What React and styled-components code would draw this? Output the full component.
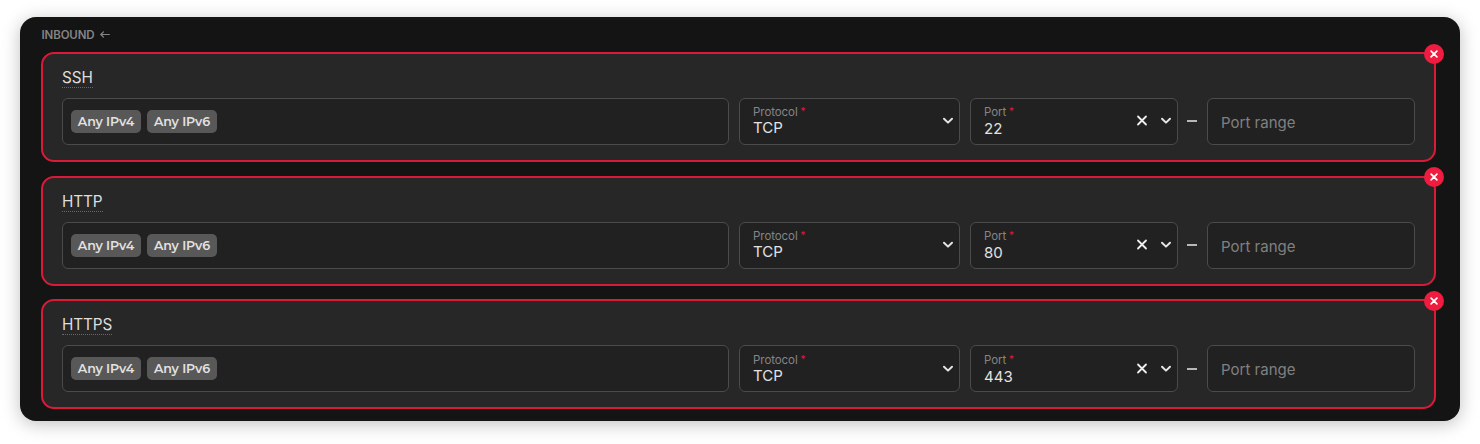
import React from "react";
import styled, { createGlobalStyle } from "styled-components";

const GlobalStyle = createGlobalStyle`
  * { box-sizing: border-box; }
  body {
    margin: 0;
    background: #fff;
    font-family: Inter, "Liberation Sans", sans-serif;
  }
`;

const Page = styled.main`
  height: 444px;
  padding: 17px 20px 23px;
  overflow: hidden;
`;

const Panel = styled.section`
  height: 404px;
  padding: 9px 24.5px 0 21.5px;
  border-radius: 16px;
  background: #141414;
  box-shadow: 0 3px 18px rgba(0, 0, 0, 0.25);
`;

const Heading = styled.h2`
  display: flex;
  align-items: center;
  gap: 5.5px;
  height: 17px;
  margin: 0 0 8.7px;
  color: #848484;
  font-size: 11.5px;
  font-weight: 600;
  line-height: 18px;
  letter-spacing: -0.12px;
`;

const Rules = styled.div`
  display: flex;
  flex-direction: column;
  gap: 13.9px;
`;

const Card = styled.article`
  position: relative;
  height: 110px;
  margin-left: -0.1px;
  padding: 13px 18.6px 0 18.6px;
  border: 2px solid #d91a38;
  border-radius: 13px;
  background: #272727;
`;

const Remove = styled.button`
  position: absolute;
  top: -10.1px;
  right: -10px;
  display: grid;
  place-items: center;
  width: 20px;
  height: 20px;
  padding: 0;
  border: 0;
  border-radius: 50%;
  background: #f01c40;
`;

const Name = styled.div`
  width: fit-content;
  height: 21px;
  margin-bottom: 10px;
  border-bottom: 1px dotted #686868;
  color: #dedede;
  font-size: 15.3px;
  line-height: 22px;
  letter-spacing: -0.1px;
`;

const Fields = styled.div`
  display: grid;
  grid-template-columns: 667.2px 221.5px 208px 10px 208px;
  column-gap: 9.5px;
  align-items: center;
`;

const Field = styled.div`
  position: relative;
  display: flex;
  align-items: center;
  height: 47px;
  padding: ${(p) => p.$pad || "0 13.4px"};
  border: 1px solid #4b4b4b;
  border-radius: 6px;
  background: #212121;
`;

const Tags = styled(Field)`
  gap: 6px;
  padding: 0 8px;
`;

const Tag = styled.span`
  width: 70px;
  height: 23px;
  border-radius: 5px;
  background: #585858;
  color: #e2e2e2;
  font-family: Montserrat, Inter, sans-serif;
  font-size: 12.6px;
  font-weight: 600;
  line-height: 24px;
  letter-spacing: -0.1px;
  text-align: center;
  white-space: nowrap;
`;

const Stack = styled.div`
  flex: 1;
  padding-top: ${(p) => p.$top || "0"};
`;

const Label = styled.div`
  height: 13px;
  color: #858585;
  font-size: 11.5px;
  line-height: 14.4px;
  letter-spacing: -0.08px;
`;

const Required = styled.span`
  position: relative;
  top: -1px;
  margin-left: 2.5px;
  color: #d91635;
  font-size: 10.5px;
  font-weight: 500;
`;

const Value = styled.div`
  margin-top: ${(p) => p.$gap || "1px"};
  color: #e2e2e2;
  font-size: 15px;
  line-height: 18.5px;
`;

const Actions = styled.div`
  display: flex;
  align-items: center;
  gap: 12px;
  height: 12px;
`;

const Dash = styled.span`
  width: 10px;
  height: 2px;
  background: #b8b8b8;
`;

const Placeholder = styled.span`
  padding-top: 2px;
  color: #808080;
  font-size: 15px;
`;

const Icon = styled.svg`
  display: block;
  transform: translateY(${(p) => p.$shift || "0"});
`;

const Chevron = () => (
  <Icon $shift="-0.5px" width="12" height="12" viewBox="0 0 12 12" fill="none" stroke="#e4e4e4" strokeWidth="2" strokeLinecap="round" strokeLinejoin="round">
    <path d="M2 4.2 6 8.1 10 4.2" />
  </Icon>
);

const ClearCross = () => (
  <Icon $shift="-0.5px" width="12" height="12" viewBox="0 0 12 12" fill="none" stroke="#eee" strokeWidth="1.8" strokeLinecap="round">
    <path d="m2 2 8 8M10 2 2 10" />
  </Icon>
);

const RemoveCross = () => (
  <Icon width="10" height="10" viewBox="0 0 10 10" fill="none" stroke="#fff" strokeWidth="1.7" strokeLinecap="round">
    <path d="m2.1 2.1 5.8 5.8M7.9 2.1 2.1 7.9" />
  </Icon>
);

const ArrowLeft = () => (
  <Icon $shift="-0.5px" width="10" height="10" viewBox="0 0 10 10" fill="none" stroke="currentColor" strokeWidth="1.2" strokeLinecap="round" strokeLinejoin="round">
    <path d="M9.3 5H.8M3.5 2.3.8 5l2.7 2.7" />
  </Icon>
);

const rules = [
  { name: "SSH", port: "22" },
  { name: "HTTP", port: "80" },
  { name: "HTTPS", port: "443" },
];

function Rule({ name, port }) {
  return (
    <Card>
      <Name>{name}</Name>
      <Fields>
        <Tags>
          <Tag>Any IPv4</Tag>
          <Tag>Any IPv6</Tag>
        </Tags>
        <Field $pad="0 5px 0 13.4px">
          <Stack $top="0.5px">
            <Label>Protocol<Required>*</Required></Label>
            <Value $gap="1.3px">TCP</Value>
          </Stack>
          <Chevron />
        </Field>
        <Field $pad="0 5px 0 13.4px">
          <Stack $top="1px">
            <Label>Port<Required>*</Required></Label>
            <Value $gap="2px">{port}</Value>
          </Stack>
          <Actions>
            <ClearCross />
            <Chevron />
          </Actions>
        </Field>
        <Dash />
        <Field>
          <Placeholder>Port range</Placeholder>
        </Field>
      </Fields>
      <Remove aria-label={`Remove ${name}`}>
        <RemoveCross />
      </Remove>
    </Card>
  );
}

export default function App() {
  return (
    <Page>
      <GlobalStyle />
      <Panel>
        <Heading>INBOUND <ArrowLeft /></Heading>
        <Rules>
          {rules.map((rule) => (
            <Rule key={rule.name} {...rule} />
          ))}
        </Rules>
      </Panel>
    </Page>
  );
}
